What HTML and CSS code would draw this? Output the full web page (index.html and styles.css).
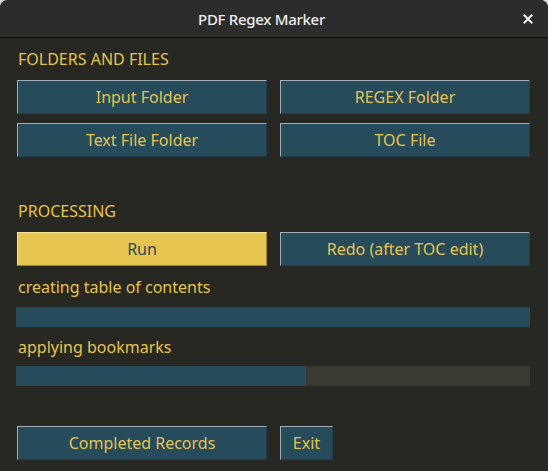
FILE: index.html
```html
<!DOCTYPE html>
<html>
<head>
<meta charset="utf-8">
<link rel="stylesheet" href="styles.css">
</head>
<body>
<div class="window">
  <div class="titlebar">
    <div class="title">PDF Regex Marker</div>
    <div class="close">
      <svg width="10" height="10" viewBox="0 0 10 10"><path d="M1.5 1.5 L8.5 8.5 M8.5 1.5 L1.5 8.5" stroke="#f0f0f0" stroke-width="2" stroke-linecap="square"/></svg>
    </div>
  </div>
  <div class="content">
    <div class="label head">FOLDERS AND FILES</div>
    <div class="row r1">
      <button class="btn wide">Input Folder</button>
      <button class="btn wide">REGEX Folder</button>
    </div>
    <div class="row r2">
      <button class="btn wide">Text File Folder</button>
      <button class="btn wide">TOC File</button>
    </div>
    <div class="label head proc">PROCESSING</div>
    <div class="row r1">
      <button class="btn wide run">Run</button>
      <button class="btn wide">Redo (after TOC edit)</button>
    </div>
    <div class="label l1">creating table of contents</div>
    <div class="bar b1"><div class="fill" style="width:100%"></div></div>
    <div class="label l2">applying bookmarks</div>
    <div class="bar b2"><div class="fill" style="width:290px"></div></div>
    <div class="row bottom">
      <button class="btn wide">Completed Records</button>
      <button class="btn exit">Exit</button>
    </div>
  </div>
</div>
</body>
</html>
```
FILE: styles.css
```css
html, body {
  margin: 0;
  padding: 0;
  background: #d6d6d6;
}
.window {
  width: 548px;
  height: 471px;
  background: #282823;
  border-radius: 8px 8px 0 0;
  overflow: hidden;
  font-family: "Noto Sans", sans-serif;
}
.titlebar {
  height: 37px;
  background: #2c2c2c;
  border-bottom: 1px solid #0c0c0c;
  display: flex;
  align-items: center;
}
.title {
  flex: 1;
  text-align: center;
  color: #ececec;
  font-weight: 500;
  font-size: 15px;
  letter-spacing: -0.3px;
}
.close {
  width: 25px;
  display: flex;
  justify-content: flex-start;
}
.content {
  padding: 11px 18px 0 16px;
}
.label {
  height: 20px;
  line-height: 20px;
  font-size: 16px;
  color: #e6c34f;
  padding-left: 2px;
}
.row {
  display: flex;
  gap: 13px;
  padding-left: 1px;
}
.r1 { margin-top: 11px; }
.r2 { margin-top: 9px; }
.proc { margin-top: 44px; }
.l1 { margin-top: 11px; }
.b1 { margin-top: 10px; }
.l2 { margin-top: 10px; }
.b2 { margin-top: 9px; }
.bottom { margin-top: 40px; }
.btn {
  box-sizing: border-box;
  height: 34px;
  background: #264b5b;
  color: #e6c34f;
  font-family: "Noto Sans", sans-serif;
  font-size: 16px;
  border: 1px solid #1f3f4c;
  border-top-color: #a3adb5;
  border-left-color: #a3adb5;
  padding: 0;
  margin: 0;
}
.wide { width: 250px; }
.exit { width: 53px; }
.run {
  background: #e6c551;
  color: #264b5b;
  border-color: #9c8434;
  border-top-color: #f6e396;
  border-left-color: #f6e396;
}
.bar {
  height: 20px;
  background: #3a3a33;
  width: 514px;
}
.fill {
  height: 100%;
  background: #264b5b;
}
```
